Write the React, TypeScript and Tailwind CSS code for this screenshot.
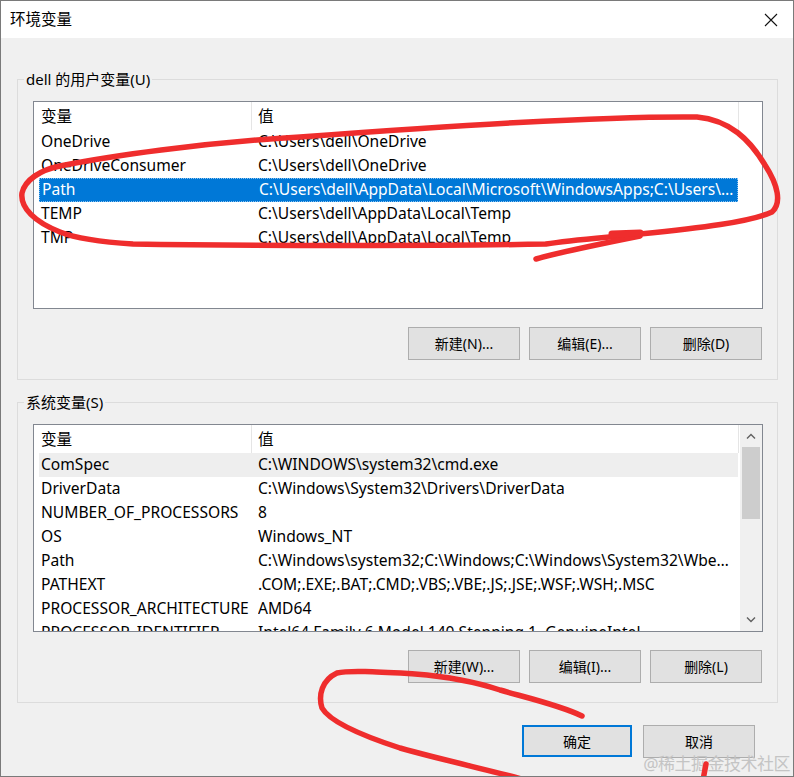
const userVars = [
  ['OneDrive', 'C:\\Users\\dell\\OneDrive'],
  ['OneDriveConsumer', 'C:\\Users\\dell\\OneDrive'],
  ['Path', 'C:\\Users\\dell\\AppData\\Local\\Microsoft\\WindowsApps;C:\\Users\\dell\\AppData\\Local\\Programs\\Microsoft VS Code\\bin'],
  ['TEMP', 'C:\\Users\\dell\\AppData\\Local\\Temp'],
  ['TMP', 'C:\\Users\\dell\\AppData\\Local\\Temp'],
]

const sysVars = [
  ['ComSpec', 'C:\\WINDOWS\\system32\\cmd.exe'],
  ['DriverData', 'C:\\Windows\\System32\\Drivers\\DriverData'],
  ['NUMBER_OF_PROCESSORS', '8'],
  ['OS', 'Windows_NT'],
  ['Path', 'C:\\Windows\\system32;C:\\Windows;C:\\Windows\\System32\\Wbem;C:\\Windows\\System32\\WindowsPowerShell\\v1.0\\'],
  ['PATHEXT', '.COM;.EXE;.BAT;.CMD;.VBS;.VBE;.JS;.JSE;.WSF;.WSH;.MSC'],
  ['PROCESSOR_ARCHITECTURE', 'AMD64'],
  ['PROCESSOR_IDENTIFIER', 'Intel64 Family 6 Model 140 Stepping 1, GenuineIntel'],
]

function Chevron({ up }: { up?: boolean }) {
  return (
    <svg width="10" height="6" viewBox="0 0 10 6">
      <path
        d={up ? 'M1 5.5 L5 1.5 L9 5.5' : 'M1 0.5 L5 4.5 L9 0.5'}
        fill="none"
        stroke="#606060"
        strokeWidth="1.4"
      />
    </svg>
  )
}

function VarList({
  rows,
  selected,
  hover,
  scroll,
}: {
  rows: string[][]
  selected?: number
  hover?: number
  scroll?: boolean
}) {
  return (
    <div className="h-[208px] w-[730px] border border-[#828790] bg-white flex overflow-hidden">
      <div className="w-[706px] flex flex-col">
        {/* header */}
        <div className="h-[28px] flex shrink-0">
          <div className="w-[218px] pl-[7px] pt-[1px] border-r border-[#e5e5e5] flex items-center">变量</div>
          <div className="w-[487px] pl-[6px] pt-[1px] border-r border-[#e5e5e5] flex items-center">值</div>
        </div>
        {rows.map(([name, value], i) => (
          <div
            key={name}
            className={
              i === selected
                ? 'h-[24px] shrink-0 ml-[5px] w-[699px] flex items-center bg-[#0078d7] text-white border border-dotted border-[#8cc3f0]'
                : i === hover
                  ? 'h-[24px] shrink-0 ml-[5px] w-[699px] flex items-center bg-[#eeeeee]'
                  : 'h-[24px] shrink-0 ml-[5px] w-[699px] flex items-center'
            }
          >
            <div className="w-[219px] pl-[2px] whitespace-nowrap overflow-hidden">{name}</div>
            <div className="w-[476px] whitespace-nowrap overflow-hidden text-ellipsis">{value}</div>
          </div>
        ))}
      </div>
      {scroll && (
        <div className="w-[22px] bg-[#f0f0f0] flex flex-col items-center">
          <div className="h-[22px] flex items-center justify-center">
            <Chevron up />
          </div>
          <div className="h-[72px] w-[18px] bg-[#cdcdcd]" />
          <div className="flex-1" />
          <div className="h-[22px] flex items-center justify-center">
            <Chevron />
          </div>
        </div>
      )}
    </div>
  )
}

function Btn({ label, primary }: { label: string; primary?: boolean }) {
  return (
    <button
      className={
        primary
          ? 'h-[32px] w-[110px] bg-[#e1e1e1] border-2 border-[#0078d7] text-[14px] flex items-center justify-center'
          : 'h-[33px] w-[112px] bg-[#e1e1e1] border border-[#adadad] text-[14px] flex items-center justify-center'
      }
    >
      {label}
    </button>
  )
}

function Group({
  title,
  rows,
  buttons,
  selected,
  hover,
  scroll,
}: {
  title: string
  rows: string[][]
  buttons: string[]
  selected?: number
  hover?: number
  scroll?: boolean
}) {
  return (
    <div className="relative w-[761px] h-[301px] border border-[#dcdcdc] pt-[21px] pl-[15px] shrink-0">
      <span className="absolute left-[6px] top-[-12px] px-[2px] bg-[#f0f0f0] leading-[22px] text-[15px]">{title}</span>
      <div className="text-[15.6px]">
        <VarList rows={rows} selected={selected} hover={hover} scroll={scroll} />
      </div>
      <div className="flex justify-end gap-[9px] mt-[18px] w-[730px] pr-[1px]">
        {buttons.map((b) => (
          <Btn key={b} label={b} />
        ))}
      </div>
    </div>
  )
}

export default function App() {
  return (
    <div className="relative w-[794px] h-[777px] overflow-hidden bg-[#f0f0f0] border-l border-t border-r border-b border-[#7a7a7a] flex flex-col text-[15px] text-black font-['Noto_Sans','Noto_Sans_CJK_SC',sans-serif]">
      {/* Title bar */}
      <div className="h-[37px] shrink-0 bg-white flex items-center justify-between pl-[9px] pr-[15px]">
        <span className="text-[15.5px]">环境变量</span>
        <svg width="14" height="14" viewBox="0 0 14 14">
          <path d="M1 1 L13 13 M13 1 L1 13" stroke="#111" strokeWidth="1.1" />
        </svg>
      </div>

      {/* Body */}
      <div className="flex flex-col pt-[41px] pl-[16px]">
        <Group
          title="dell 的用户变量(U)"
          rows={userVars}
          selected={2}
          buttons={['新建(N)...', '编辑(E)...', '删除(D)']}
        />
        <div className="h-[22px]" />
        <Group
          title="系统变量(S)"
          rows={sysVars}
          hover={0}
          scroll
          buttons={['新建(W)...', '编辑(I)...', '删除(L)']}
        />
        <div className="flex justify-end gap-[11px] mt-[22px] w-[761px] pr-[23px]">
          <Btn label="确定" primary />
          <Btn label="取消" />
        </div>
      </div>

      {/* watermark */}
      <span className="absolute right-[3px] bottom-[1px] text-[17px] leading-[22px] text-[#c4c4c4] tracking-[-0.5px]">
        @稀土掘金技术社区
      </span>

      {/* red hand-drawn marks */}
      <svg
        className="absolute left-[-1px] top-[-1px] pointer-events-none"
        width="794"
        height="777"
        viewBox="0 0 794 777"
        fill="none"
        stroke="#ef2d2d"
        strokeWidth="5.5"
        strokeLinecap="round"
        strokeLinejoin="round"
      >
        <path d="M546 244 C450 246 250 246 133 244 C100 242 75 238 60 232 C35 222 20 208 22 193 C25 180 40 170 60 166 C110 156 200 143 300 137 C450 126 600 116 697 117 C730 120 750 140 765 165 C778 185 782 203 772 212 C750 222 700 228 640 234 C600 238 570 240 546 244" />
        <path d="M536 259 C560 252 600 244 640 236" />
        <path d="M612 234 L640 233" strokeWidth="7" />
        <path d="M582 716 C560 705 520 696 500 690 C470 680 440 676 415 674 C380 672 350 670 337 673 C322 680 318 695 322 708 C330 722 360 735 400 748 C450 762 490 770 525 780" />
        <path d="M706 764 L703 780" />
      </svg>
    </div>
  )
}
